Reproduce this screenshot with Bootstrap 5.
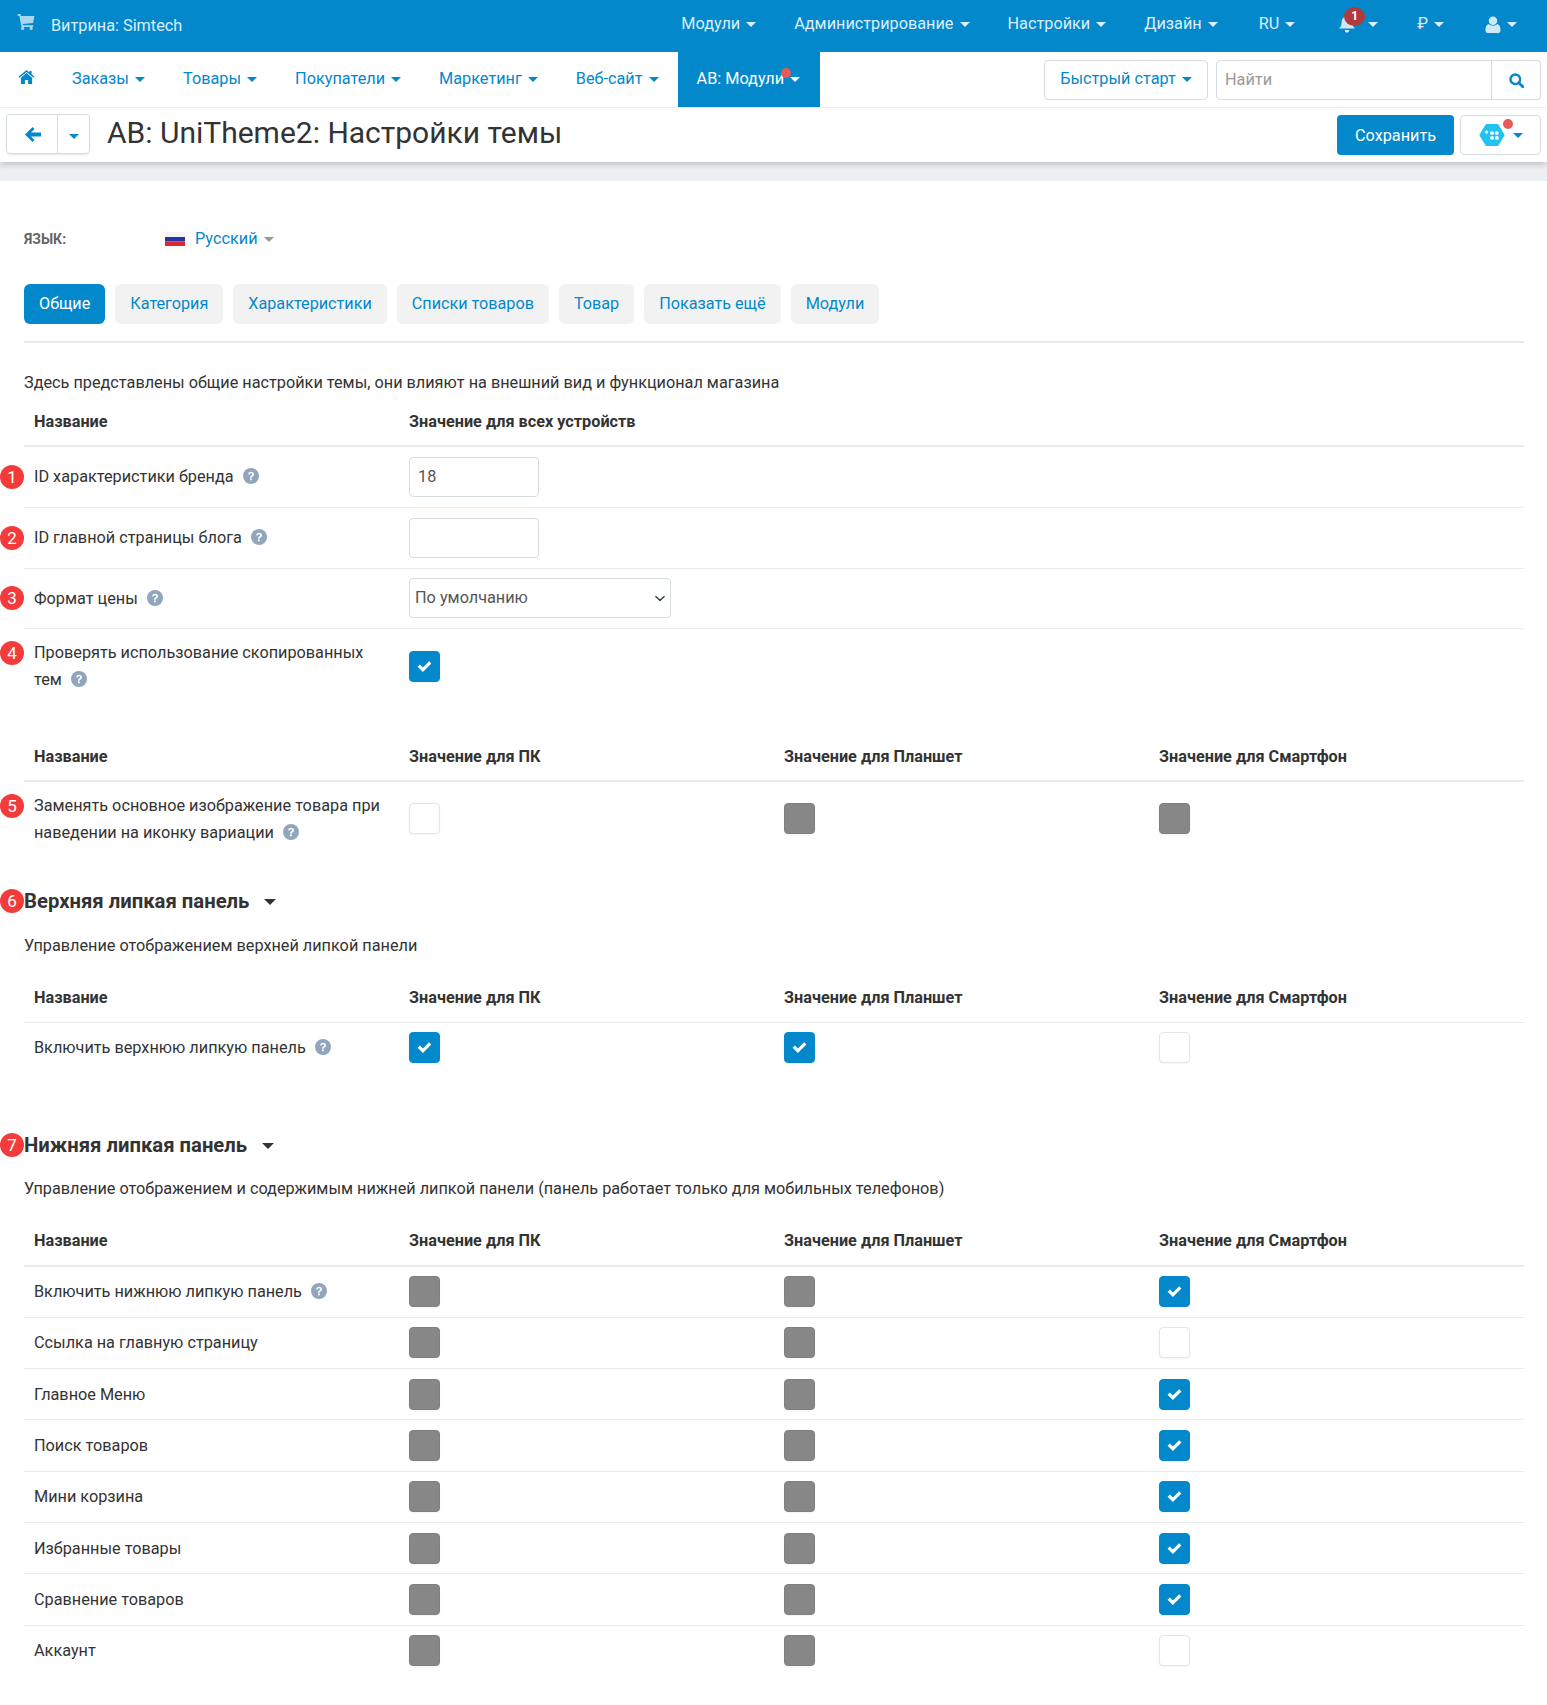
<!DOCTYPE html>
<html lang="ru">
<head>
  <meta charset="UTF-8">
  <title>AB: UniTheme2: Настройки темы</title>
  <link href="https://cdn.jsdelivr.net/npm/bootstrap@5.3.0/dist/css/bootstrap.min.css" rel="stylesheet">
  <style>
    body { font-family: Roboto, sans-serif; font-size: 16.25px; color: #333; background: #fff; }
    a { text-decoration: none; }
    .caret-down { display: inline-block; width: 0; height: 0; margin-left: 6px; vertical-align: 2px; border-left: 5px solid transparent; border-right: 5px solid transparent; border-top: 5px solid currentColor; }

    .top-bar { height: 52px; background: #0388cc; padding: 0 30px 0 17px; }
    .top-bar a { color: #dbeffa; font-size: 16.25px; }
    .top-links { gap: 38px; padding-bottom: 3px; }
    .brand-link { gap: 16px; }
    .gap-more-a { margin-left: 3px; }
    .gap-more-b { margin-left: 5px; }
    .gap-more-c { margin-left: 1px; }
    .bell-wrap { position: relative; display: inline-flex; align-items: center; }
    .bell-wrap .caret-down { margin-left: 12px; }
    .bell-count { position: absolute; left: 6px; top: -8px; width: 21px; height: 19px; border-radius: 50%; background: #b03a3e; color: #fff; font-size: 12px; font-weight: 700; text-align: center; line-height: 19px; }

    .sub-bar { height: 56px; background: #fff; padding-right: 6px; border-bottom: 1px solid #f1f3f4; }
    .sub-bar .menu-link { color: #0388cc; font-size: 16.25px; margin-right: 38px; }
    .sub-bar .menu-last { margin-right: 19px; }
    .home-link { margin: 0 37px 5px 18px; color: #0388cc; line-height: 1; }
    .menu-active { position: relative; background: #0388cc; color: #fff; font-size: 16.25px; height: 55px; width: 142px; padding: 0 0 1px 19px; align-self: flex-start; }
    .menu-dot { position: absolute; left: 103px; top: 16px; width: 10px; height: 10px; border-radius: 50%; background: #e85a5a; }
    .quick-btn { height: 40px; width: 164px; border: 1px solid #d5dde3; border-radius: 4px; color: #0388cc; font-size: 16.25px; background: #fff; padding: 0; }
    .search-box { width: 325px; height: 40px; margin-left: 8px; }
    .search-box input { border: 1px solid #d5dde3; border-radius: 4px 0 0 4px; font-size: 16.25px; padding: 0 8px; height: 40px; }
    .search-box input::placeholder { color: #999; }
    .search-box button { flex: 0 0 49px; background: #fff; border: 1px solid #d5dde3; border-left: 0; border-radius: 0 4px 4px 0; padding: 0; }

    .title-bar { height: 54px; background: #fff; padding: 6px 6px 0; box-shadow: 0 3px 6px rgba(0,0,0,.18); position: relative; }
    .back-group { width: 84px; height: 40px; border: 1px solid #d5dde3; border-radius: 4px; box-shadow: 0 1px 2px rgba(0,0,0,.1); color: #0388cc; }
    .back-arrow { width: 51px; padding-left: 2px; border-right: 1px solid #d5dde3; }
    .page-title { font-size: 30px; font-weight: 400; margin: -1px 0 0 17px; line-height: 40px; color: #333; }
    .title-actions { padding-top: 1px; }
    .save-btn { background: #0388cc; border: 0; border-radius: 4px; color: #fff; width: 117px; height: 40px; font-size: 16.25px; padding: 2px 0 0; }
    .addon-btn { position: relative; width: 81px; height: 40px; margin-left: 6px; border: 1px solid #d5dde3; border-radius: 4px; background: #fff; color: #0388cc; padding: 0; }
    .addon-btn .caret-down { margin-left: 8px; }
    .addon-dot { position: absolute; left: 42px; top: 3px; width: 10px; height: 10px; border-radius: 50%; background: #e85a5a; }
    .gray-band { height: 19px; background: #edf0f2; }

    .page-body { padding: 0 23px 0 24px; }
    .lang-line { height: 103px; padding-top: 46px; }
    .lang-label { width: 141px; color: #666; font-size: 14px; font-weight: 700; text-transform: uppercase; line-height: 24px; }
    .lang-link { color: #0388cc; font-size: 16.25px; line-height: 24px; }
    .lang-caret { color: #999; }
    .flag { width: 20px; height: 14px; margin-right: 10px; }

    .tab-row { gap: 10px; padding-bottom: 17px; border-bottom: 2px solid #e6e9ee; }
    .tab-pill { height: 40px; line-height: 40px; padding: 0 15px; border-radius: 6px; background: #f3f2f3; color: #0388cc; font-size: 16.2px; }
    .tab-pill-on { background: #0388cc; color: #fff; }

    .note-text { line-height: 22px; margin: 0; color: #333; }
    .note-first { margin-top: 29px; }
    .note-a { margin-top: 20px; }
    .note-b { margin-top: 19px; }
    .set-table { table-layout: fixed; margin: 0; color: #333; }
    .set-table th, .set-table td { padding: 0 10px; vertical-align: middle; border-bottom: 1px solid #e9ebee; line-height: 27px; }
    .set-table th { font-weight: 700; vertical-align: bottom; padding-bottom: 11px; border-bottom: 2px solid #e9ebee; }
    .set-table .head-std th { padding-bottom: 10px; }
    .set-table td.no-line { border-bottom: 0; }
    .set-table .thin-head th { border-bottom-width: 1px; }
    .table-second { margin-top: 24px; }
    .name-cell { position: relative; }
    .head-std { height: 52px; }
    .head-next { height: 53px; }
    .head-mid { height: 65px; }
    .head-tall { height: 66px; }
    .row-input { height: 61px; }
    .row-select { height: 60px; }
    .row-two { height: 76px; }
    .row-five { height: 74px; }
    .row-single { height: 50px; }
    .row-short { height: 51.3px; }
    .mark-num { position: absolute; left: -24px; top: 50%; margin-top: -12px; width: 24px; height: 24px; border-radius: 50%; background: #f33b3b; color: #fff; font-size: 17px; text-align: center; line-height: 24px; font-weight: 400; }
    .mark-high { top: 12px; margin-top: 0; }
    .help-ico { display: inline-block; width: 16px; height: 16px; margin-left: 9px; vertical-align: -2px; }
    .text-in { width: 130px; height: 40px; border: 1px solid #d5dde3; border-radius: 4px; padding: 0 8px; font-size: 16.25px; color: #555; display: block; }
    .sel-in { width: 262px; height: 40px; border: 1px solid #d5dde3; border-radius: 4px; padding: 0 30px 0 5px; font-size: 16.25px; color: #555; background-position: right 3px center; background-size: 14px 11px; }
    .chk { display: block; width: 31px; height: 31px; border-radius: 4px; border: 1px solid #e4e6e8; background: #fff; box-shadow: 0 1px 2px rgba(0,0,0,.05); }
    .chk-on { background: #0388cc; border-color: #0388cc; }
    .chk-off { background: #878787; border-color: #808080; }
    .chk svg { display: block; width: 15px; height: 13px; margin: 8px 7px; }

    .sect-title { position: relative; font-size: 20.3px; font-weight: 700; line-height: 28px; margin: 0; color: #333; }
    .sect-title .mark-num { left: -24px; top: 2px; margin: 0; }
    .sect-a { margin-top: 32px; }
    .sect-b { margin-top: 59px; }
    .sect-caret { margin-left: 15px; border-left-width: 6px; border-right-width: 6px; border-top-width: 6px; vertical-align: 3px; }
  </style>
</head>
<body>
  <svg width="0" height="0" class="position-absolute">
    <symbol id="i-help" viewBox="0 0 16 16"><circle cx="8" cy="8" r="8" fill="#91a6bd"/><path d="M5.2 6.2C5.4 4.6 6.600 3.800 8.100 3.800c1.700 0 2.900 1 2.900 2.400 0 1.200-.7 1.800-1.500 2.300-.6.400-.8.600-.8 1.200H7c0-1.200.4-1.800 1.200-2.300.6-.4 1-.7 1-1.200 0-.5-.5-.9-1.100-.9-.7 0-1.200.4-1.300 1.100zM7 10.600h1.800v1.700H7z" fill="#fff"/></symbol>
    <symbol id="i-check" viewBox="1.500 3 13 10.500"><path d="M2 8.500l2-2 2.600 2.600L12 3.700l2 2-7.400 7.400z" fill="#fff"/></symbol>
  </svg>

  <div class="top-bar d-flex align-items-center justify-content-between">
    <a href="#" class="brand-link d-flex align-items-center">
      <svg width="18" height="16" viewBox="0 0 18 17" class="mb-2"><path d="M0 0h3.200l.5 2H18l-1.500 7.500-11 1 .3 1.500h10.700v1.800H4.200L1.900 1.800H0z" fill="#a9d6ef"/><circle cx="5.500" cy="15.300" r="1.700" fill="#a9d6ef"/><circle cx="14.500" cy="15.300" r="1.700" fill="#a9d6ef"/></svg>
      <span>Витрина: Simtech</span>
    </a>
    <div class="top-links d-flex align-items-center">
      <a href="#">Модули<i class="caret-down"></i></a>
      <a href="#">Администрирование<i class="caret-down"></i></a>
      <a href="#">Настройки<i class="caret-down"></i></a>
      <a href="#">Дизайн<i class="caret-down"></i></a>
      <a href="#" class="gap-more-a">RU<i class="caret-down"></i></a>
      <a href="#" class="bell-wrap gap-more-b">
        <svg width="18" height="19" viewBox="0 0 20 20"><path d="M10 0c1 0 1.600.6 1.600 1.500 3 .6 4.400 3 4.400 6 0 4 1.200 5.500 3 7H1c1.800-1.500 3-3 3-7 0-3 1.400-5.400 4.400-6C8.400.6 9 0 10 0zM7.500 16h5c0 1.600-1 3-2.500 3s-2.500-1.400-2.500-3z" fill="#cfe8f6"/></svg>
        <span class="bell-count">1</span><i class="caret-down"></i>
      </a>
      <a href="#" class="gap-more-c">₽<i class="caret-down"></i></a>
      <a href="#" class="gap-more-a d-inline-flex align-items-center">
        <svg width="16" height="17" viewBox="0 0 16 18"><circle cx="8" cy="5" r="4.500" fill="#cfe8f6"/><path d="M0 15c0-4 1.500-6 3.500-6.500C4.700 9.500 6.200 10.200 8 10.200s3.300-.7 4.500-1.700C14.500 9 16 11 16 15c0 1.800-1 3-2.800 3H2.800C1 18 0 16.800 0 15z" fill="#cfe8f6"/></svg>
        <i class="caret-down"></i>
      </a>
    </div>
  </div>

  <div class="sub-bar d-flex align-items-center">
    <a href="#" class="home-link">
      <svg width="17" height="14" viewBox="0 0 17 15" class="d-block"><path d="M8.500 0l3.200 2.700V1h2.300v3.600L17 7.200l-1 1.100-7.500-6.200L1 8.300 0 7.200z" fill="#0388cc"/><path d="M8.500 3.300l6 5V15H10.200v-4.300H6.800V15H2.500V8.300z" fill="#0388cc"/></svg>
    </a>
    <a href="#" class="menu-link">Заказы<i class="caret-down"></i></a>
    <a href="#" class="menu-link">Товары<i class="caret-down"></i></a>
    <a href="#" class="menu-link">Покупатели<i class="caret-down"></i></a>
    <a href="#" class="menu-link">Маркетинг<i class="caret-down"></i></a>
    <a href="#" class="menu-link menu-last">Веб-сайт<i class="caret-down"></i></a>
    <a href="#" class="menu-active d-flex align-items-center">AB: Модули<i class="caret-down"></i><span class="menu-dot"></span></a>
    <div class="ms-auto d-flex align-items-center">
      <button class="quick-btn" type="button">Быстрый старт<i class="caret-down"></i></button>
      <div class="search-box d-flex">
        <input class="form-control shadow-none" type="text" placeholder="Найти">
        <button type="button">
          <svg width="15" height="15" viewBox="0 0 15 15"><circle cx="6.300" cy="6.300" r="4.800" fill="none" stroke="#0388cc" stroke-width="2.400"/><path d="M9.800 9.800l4 4" stroke="#0388cc" stroke-width="2.800" stroke-linecap="round"/></svg>
        </button>
      </div>
    </div>
  </div>

  <div class="title-bar d-flex">
    <div class="back-group d-flex">
      <div class="back-arrow d-flex align-items-center justify-content-center">
        <svg width="16" height="15" viewBox="0 0 16 15"><path d="M7.500 0L9.500 2 6 5.600h10v3.800H6l3.500 3.600-2 2L0 7.500z" fill="#0388cc"/></svg>
      </div>
      <div class="flex-fill d-flex align-items-center justify-content-center"><i class="caret-down ms-0 mt-1"></i></div>
    </div>
    <h1 class="page-title">AB: UniTheme2: Настройки темы</h1>
    <div class="title-actions ms-auto d-flex">
      <button class="save-btn" type="button">Сохранить</button>
      <button class="addon-btn d-flex align-items-center justify-content-center" type="button">
        <svg width="26" height="24" viewBox="0 0 27 24"><path d="M8 2h11l6 10-6 10H8L2 12z" fill="#22c3f0" stroke="#22c3f0" stroke-width="3" stroke-linejoin="round"/><circle cx="8" cy="9" r="1.600" fill="#fff"/><circle cx="13.500" cy="10" r="2" fill="#fff"/><circle cx="18.500" cy="10" r="2" fill="#fff"/><circle cx="13.500" cy="15" r="2" fill="#fff"/><circle cx="18.500" cy="15" r="2" fill="#fff"/></svg>
        <i class="caret-down"></i><span class="addon-dot"></span>
      </button>
    </div>
  </div>
  <div class="gray-band"></div>

  <div class="page-body">
    <div class="lang-line d-flex align-items-start">
      <span class="lang-label">Язык:</span>
      <a href="#" class="lang-link d-flex align-items-center">
        <svg class="flag" viewBox="0 0 20 14"><rect width="20" height="5" fill="#f4f4f6"/><rect y="5" width="20" height="4.500" fill="#2434a8"/><rect y="9.500" width="20" height="4.500" fill="#e0242a"/></svg>
        Русский<i class="caret-down lang-caret"></i>
      </a>
    </div>

    <div class="tab-row d-flex">
      <a href="#" class="tab-pill tab-pill-on">Общие</a>
      <a href="#" class="tab-pill">Категория</a>
      <a href="#" class="tab-pill">Характеристики</a>
      <a href="#" class="tab-pill">Списки товаров</a>
      <a href="#" class="tab-pill">Товар</a>
      <a href="#" class="tab-pill">Показать ещё</a>
      <a href="#" class="tab-pill">Модули</a>
    </div>

    <p class="note-text note-first">Здесь представлены общие настройки темы, они влияют на внешний вид и функционал магазина</p>

    <table class="table set-table">
      <thead>
        <tr class="head-std"><th>Название</th><th>Значение для всех устройств</th><th></th><th></th></tr>
      </thead>
      <tbody>
        <tr class="row-input">
          <td class="name-cell"><span class="mark-num">1</span>ID характеристики бренда<svg class="help-ico"><use href="#i-help"/></svg></td>
          <td><input class="text-in" type="text" value="18"></td><td></td><td></td>
        </tr>
        <tr class="row-input">
          <td class="name-cell"><span class="mark-num">2</span>ID главной страницы блога<svg class="help-ico"><use href="#i-help"/></svg></td>
          <td><input class="text-in" type="text"></td><td></td><td></td>
        </tr>
        <tr class="row-select">
          <td class="name-cell"><span class="mark-num">3</span>Формат цены<svg class="help-ico"><use href="#i-help"/></svg></td>
          <td colspan="3"><select class="form-select shadow-none sel-in"><option>По умолчанию</option></select></td>
        </tr>
        <tr class="row-two">
          <td class="name-cell no-line"><span class="mark-num mark-high">4</span>Проверять использование скопированных тем<svg class="help-ico"><use href="#i-help"/></svg></td>
          <td class="no-line"><span class="chk chk-on"><svg><use href="#i-check"/></svg></span></td><td class="no-line"></td><td class="no-line"></td>
        </tr>
      </tbody>
    </table>

    <table class="table set-table table-second">
      <thead>
        <tr class="head-next head-std"><th>Название</th><th>Значение для ПК</th><th>Значение для Планшет</th><th>Значение для Смартфон</th></tr>
      </thead>
      <tbody>
        <tr class="row-five">
          <td class="name-cell no-line"><span class="mark-num mark-high">5</span>Заменять основное изображение товара при наведении на иконку вариации<svg class="help-ico"><use href="#i-help"/></svg></td>
          <td class="no-line"><span class="chk"></span></td>
          <td class="no-line"><span class="chk chk-off"></span></td>
          <td class="no-line"><span class="chk chk-off"></span></td>
        </tr>
      </tbody>
    </table>

    <h2 class="sect-title sect-a"><span class="mark-num">6</span>Верхняя липкая панель<i class="caret-down sect-caret"></i></h2>
    <p class="note-text note-a">Управление отображением верхней липкой панели</p>
    <table class="table set-table">
      <thead class="thin-head">
        <tr class="head-mid"><th>Название</th><th>Значение для ПК</th><th>Значение для Планшет</th><th>Значение для Смартфон</th></tr>
      </thead>
      <tbody>
        <tr class="row-single">
          <td class="no-line">Включить верхнюю липкую панель<svg class="help-ico"><use href="#i-help"/></svg></td>
          <td class="no-line"><span class="chk chk-on"><svg><use href="#i-check"/></svg></span></td>
          <td class="no-line"><span class="chk chk-on"><svg><use href="#i-check"/></svg></span></td>
          <td class="no-line"><span class="chk"></span></td>
        </tr>
      </tbody>
    </table>

    <h2 class="sect-title sect-b"><span class="mark-num">7</span>Нижняя липкая панель<i class="caret-down sect-caret"></i></h2>
    <p class="note-text note-b">Управление отображением и содержимым нижней липкой панели (панель работает только для мобильных телефонов)</p>
    <table class="table set-table">
      <thead>
        <tr class="head-tall"><th>Название</th><th>Значение для ПК</th><th>Значение для Планшет</th><th>Значение для Смартфон</th></tr>
      </thead>
      <tbody>
        <tr class="row-short"><td>Включить нижнюю липкую панель<svg class="help-ico"><use href="#i-help"/></svg></td><td><span class="chk chk-off"></span></td><td><span class="chk chk-off"></span></td><td><span class="chk chk-on"><svg><use href="#i-check"/></svg></span></td></tr>
        <tr class="row-short"><td>Ссылка на главную страницу</td><td><span class="chk chk-off"></span></td><td><span class="chk chk-off"></span></td><td><span class="chk"></span></td></tr>
        <tr class="row-short"><td>Главное Меню</td><td><span class="chk chk-off"></span></td><td><span class="chk chk-off"></span></td><td><span class="chk chk-on"><svg><use href="#i-check"/></svg></span></td></tr>
        <tr class="row-short"><td>Поиск товаров</td><td><span class="chk chk-off"></span></td><td><span class="chk chk-off"></span></td><td><span class="chk chk-on"><svg><use href="#i-check"/></svg></span></td></tr>
        <tr class="row-short"><td>Мини корзина</td><td><span class="chk chk-off"></span></td><td><span class="chk chk-off"></span></td><td><span class="chk chk-on"><svg><use href="#i-check"/></svg></span></td></tr>
        <tr class="row-short"><td>Избранные товары</td><td><span class="chk chk-off"></span></td><td><span class="chk chk-off"></span></td><td><span class="chk chk-on"><svg><use href="#i-check"/></svg></span></td></tr>
        <tr class="row-short"><td>Сравнение товаров</td><td><span class="chk chk-off"></span></td><td><span class="chk chk-off"></span></td><td><span class="chk chk-on"><svg><use href="#i-check"/></svg></span></td></tr>
        <tr class="row-short"><td class="no-line">Аккаунт</td><td class="no-line"><span class="chk chk-off"></span></td><td class="no-line"><span class="chk chk-off"></span></td><td class="no-line"><span class="chk"></span></td></tr>
      </tbody>
    </table>
  </div>
  <script src="https://cdn.jsdelivr.net/npm/bootstrap@5.3.0/dist/js/bootstrap.bundle.min.js"></script>
</body>
</html>
